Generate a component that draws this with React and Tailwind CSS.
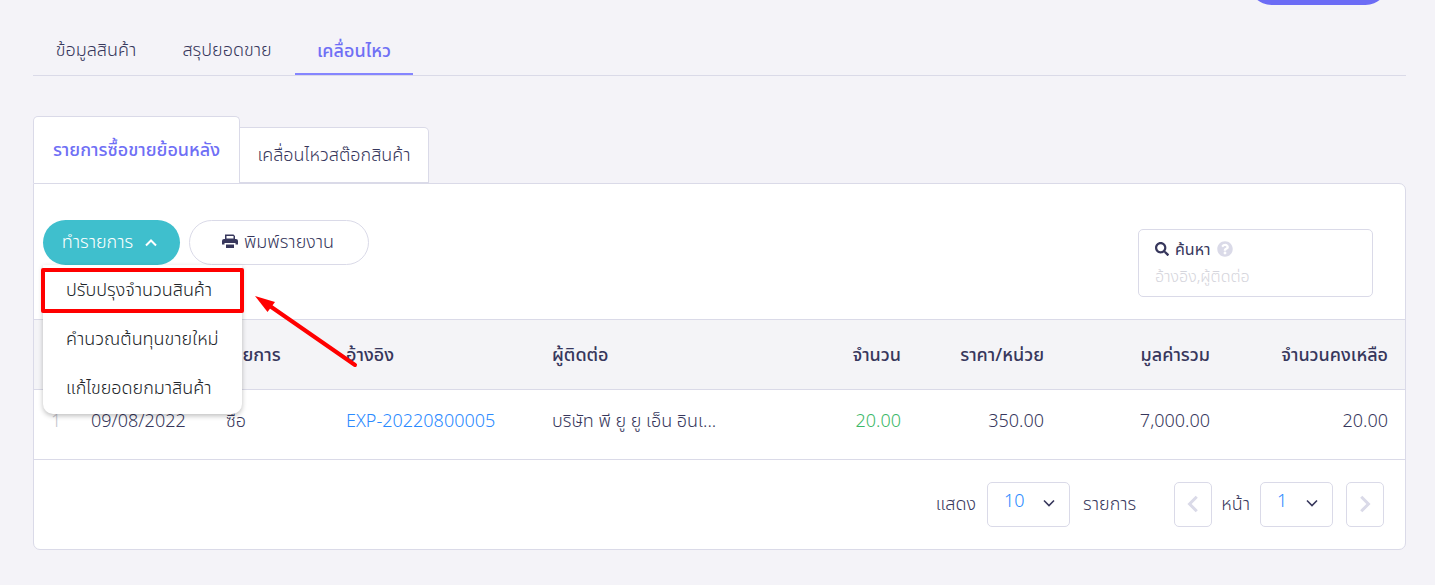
import React from "react";
import { FaSearch, FaQuestionCircle } from "react-icons/fa";

const mainTabs = [
  { label: "ข้อมูลสินค้า", width: "w-[126px]" },
  { label: "สรุปยอดขาย", width: "w-[136px]" },
  { label: "เคลื่อนไหว", width: "w-[118px]", active: true },
];

const menuItems = ["ปรับปรุงจำนวนสินค้า", "คำนวณต้นทุนขายใหม่", "แก้ไขยอดยกมาสินค้า"];

function Chevron({ d, className, strokeWidth = 2 }) {
  return (
    <svg viewBox="0 0 12 12" className={className} fill="none" stroke="currentColor" strokeWidth={strokeWidth} aria-hidden="true">
      <path d={d} />
    </svg>
  );
}

function Printer({ className }) {
  return (
    <svg viewBox="0 0 16 16" className={className} fill="currentColor" aria-hidden="true">
      <path fillRule="evenodd" d="M3 1.500 H11.500 L13 3 V6 H3 Z M4.500 3 V5.500 H11.500 V3 Z" />
      <path d="M2 6 H14 Q16 6 16 8 V11.500 H13.500 V10 H2.500 V11.500 H0 V8 Q0 6 2 6 Z" />
      <path d="M4 11.500 H12 V15 H4 Z" />
    </svg>
  );
}

function PickList({ label, value, width }) {
  return (
    <span className={`relative block ${width}`}>
      <select
        aria-label={label}
        defaultValue={value}
        className="block h-[45px] w-full appearance-none rounded-[5px] border border-[#dadae8] bg-white pb-2.5 pl-4 text-lg font-light text-[#2b8aff]"
      >
        <option>{value}</option>
      </select>
      <Chevron d="M1 3.5 L6 8.5 L11 3.5" strokeWidth={1.6} className="pointer-events-none absolute right-[15px] top-[15px] size-3 text-[#37375c]" />
    </span>
  );
}

function PageButton({ label, d }) {
  return (
    <button type="button" aria-label={label} className="flex h-[45px] w-[38px] items-center justify-center rounded-[5px] border border-[#dadae8] bg-white pb-0.5 text-[#dadae8]">
      <Chevron d={d} strokeWidth={2} className="size-[18px]" />
    </button>
  );
}

export default function App() {
  return (
    <div className="min-h-screen overflow-hidden bg-[#f4f3f8] pr-[29px] pb-9 pl-[33px] font-['Noto_Sans','Noto_Sans_Thai',sans-serif] text-lg font-light text-[#37375c]">
      <header className="flex justify-end pr-[18px]">
        <button type="button" aria-label="แก้ไข" className="-mt-10 h-[45px] w-[139px] rounded-full bg-[#6c6cf5]" />
      </header>

      <nav className="mt-[21px] flex h-[50px] border-b border-[#dadae8]">
        {mainTabs.map((tab) => (
          <a
            key={tab.label}
            href="#"
            className={`flex items-center justify-center whitespace-nowrap ${tab.width} ${
              tab.active ? "border-b-2 border-[#8585ff] font-medium text-[#6f6ff5]" : "pb-1"
            }`}
          >
            {tab.label}
          </a>
        ))}
      </nav>

      <div className="mt-10 flex items-end">
        <button type="button" className="h-[67px] w-[207px] whitespace-nowrap rounded-t-[5px] border border-b-0 border-[#dadae8] bg-white pb-0.5 font-medium text-[#6f6ff5]">
          รายการซื้อขายย้อนหลัง
        </button>
        <button type="button" className="h-14 w-[189px] whitespace-nowrap rounded-tr-[5px] border border-l-0 border-[#dadae8] bg-white pb-0.5">
          เคลื่อนไหวสต๊อกสินค้า
        </button>
      </div>

      <main className="rounded-b-[7px] rounded-tr-[7px] border border-[#dadae8] bg-white">
        <div className="flex h-[135px] items-start justify-between pt-9 pr-8 pl-[9px]">
          <div className="flex gap-[9px]">
            <div className="relative">
              <button type="button" aria-expanded="true" className="flex h-[45px] w-[137px] items-center justify-center gap-3 whitespace-nowrap rounded-full bg-[#3fbfcd] pr-1 pb-1 text-white">
                ทำรายการ
                <Chevron d="M1 8.5 L6 3.5 L11 8.5" strokeWidth={2} className="mt-1 size-3" />
              </button>
              <ul className="absolute top-[45px] left-0 z-20 w-[199px] rounded-b-[10px] bg-white pb-0.5 text-[#212529] shadow-[0_2px_5px_rgba(0,0,0,0.25)]">
                {menuItems.map((item) => (
                  <li key={item}>
                    <button type="button" className="block h-[49px] w-full whitespace-nowrap pb-0.5 pl-[23px] text-left">
                      {item}
                    </button>
                  </li>
                ))}
              </ul>
              <div className="pointer-events-none absolute top-12 -left-0.5 z-30 h-[45px] w-[203px] rounded-xs border-4 border-[#ff0000]" />
              <svg viewBox="0 0 110 80" className="pointer-events-none absolute top-[72px] left-[208px] z-30 h-20 w-[110px]" aria-hidden="true">
                <path d="M16 12 L104 73" stroke="#ff0000" strokeWidth="4" strokeLinecap="round" />
                <path d="M4 4 L24 10 L16.500 20 Z" fill="#ff0000" />
              </svg>
            </div>
            <button type="button" className="flex h-[45px] w-[180px] items-center justify-center gap-1.5 whitespace-nowrap rounded-full border border-[#dadae8] bg-white pr-0.5 pb-1">
              <Printer className="size-4" />
              พิมพ์รายงาน
            </button>
          </div>

          <div className="mt-[9px] h-[68px] w-[235px] rounded-[5px] border border-[#dadae8] px-4 pt-[7px] text-base">
            <label htmlFor="search" className="flex h-6 items-center gap-1.5 font-normal">
              <FaSearch className="size-[14px]" />
              ค้นหา
              <FaQuestionCircle className="size-4 text-[#dadae8]" />
            </label>
            <input id="search" type="text" placeholder="อ้างอิง,ผู้ติดต่อ" className="block h-[30px] w-full outline-none placeholder:text-[#d5d5dc]" />
          </div>
        </div>

        <table className="w-full table-fixed">
          <colgroup>
            <col className="w-10" />
            <col className="w-[135px]" />
            <col className="w-[120px]" />
            <col className="w-[206px]" />
            <col />
            <col className="w-[150px]" />
            <col className="w-[143px]" />
            <col className="w-[166px]" />
            <col className="w-[178px]" />
          </colgroup>
          <thead>
            <tr className="h-[70px] border-y border-[#dadae8] bg-[#f4f4f7] text-left *:px-[17px] *:pb-0.5 *:font-medium *:whitespace-nowrap">
              <th aria-label="ลำดับ"></th>
              <th aria-label="วันที่"></th>
              <th>รายการ</th>
              <th>อ้างอิง</th>
              <th>ผู้ติดต่อ</th>
              <th className="text-right">จำนวน</th>
              <th className="text-right">ราคา/หน่วย</th>
              <th className="text-right">มูลค่ารวม</th>
              <th className="text-right">จำนวนคงเหลือ</th>
            </tr>
          </thead>
          <tbody>
            <tr className="h-[70px] border-b border-[#dadae8] *:px-[17px] *:pb-2.5 *:whitespace-nowrap">
              <td className="text-[#c4c4cc]">1</td>
              <td>09/08/2022</td>
              <td>ซื้อ</td>
              <td><a href="#" className="text-[#2b8aff]">EXP-20220800005</a></td>
              <td>บริษัท พี ยู ยู เอ็น อินเ...</td>
              <td className="text-right text-[#3cb868]">20.00</td>
              <td className="text-right">350.00</td>
              <td className="text-right">7,000.00</td>
              <td className="text-right">20.00</td>
            </tr>
          </tbody>
        </table>

        <footer className="flex h-[89px] items-center justify-end pr-[21px] whitespace-nowrap">
          <span className="pb-1">แสดง</span>
          <div className="mr-[13px] ml-[11px]"><PickList label="แสดง" value="10" width="w-[83px]" /></div>
          <span className="pb-1">รายการ</span>
          <div className="mr-[9px] ml-[38px]"><PageButton label="ก่อนหน้า" d="M8.500 1.200 L3.700 6 L8.500 10.800" /></div>
          <span className="pb-1">หน้า</span>
          <div className="mr-[13px] ml-[10px]"><PickList label="หน้า" value="1" width="w-[73px]" /></div>
          <PageButton label="ถัดไป" d="M3.500 1.200 L8.300 6 L3.500 10.800" />
        </footer>
      </main>
    </div>
  );
}
